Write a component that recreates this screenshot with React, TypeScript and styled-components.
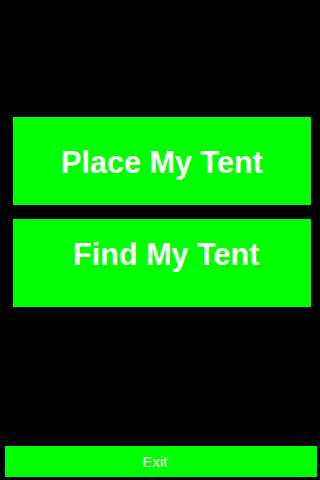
import React from 'react'
import styled, { createGlobalStyle } from 'styled-components'

const GlobalStyle = createGlobalStyle`
  html, body {
    margin: 0;
    padding: 0;
    background: #000;
  }
  body {
    font-family: "Liberation Sans", Arial, sans-serif;
  }
`

const Screen = styled.div`
  display: flex;
  flex-direction: column;
  width: 320px;
  height: 480px;
  background: #000;
  box-sizing: border-box;
  padding-top: 117px;
`

const Menu = styled.div`
  display: flex;
  flex-direction: column;
  gap: 13.5px;
  margin: 0 9px 0 13px;
`

const BigButton = styled.button<{ textTop: number }>`
  display: flex;
  justify-content: center;
  align-items: flex-start;
  height: 88px;
  padding: ${({ textTop }) => textTop}px 0 0 0;
  border: none;
  background: #00ff00;
  color: #fff;
  font-family: "Liberation Sans", Arial, sans-serif;
  font-weight: bold;
  font-size: 30.6px;
  line-height: 30px;
  white-space: pre;
  cursor: pointer;
`

const ExitBar = styled.button`
  margin: auto 3px 3px 5px;
  height: 31px;
  padding: 0 12px 0 0;
  border: none;
  background: #00ff00;
  color: #fff;
  font-family: "Liberation Sans", Arial, sans-serif;
  font-size: 15px;
  line-height: 30px;
  text-align: center;
  cursor: pointer;
`

export default function App() {
  return (
    <>
      <GlobalStyle />
      <Screen>
        <Menu>
          <BigButton textTop={29.5}>Place My Tent</BigButton>
          <BigButton textTop={20.5}>{' Find My Tent'}</BigButton>
        </Menu>
        <ExitBar>Exit</ExitBar>
      </Screen>
    </>
  )
}
